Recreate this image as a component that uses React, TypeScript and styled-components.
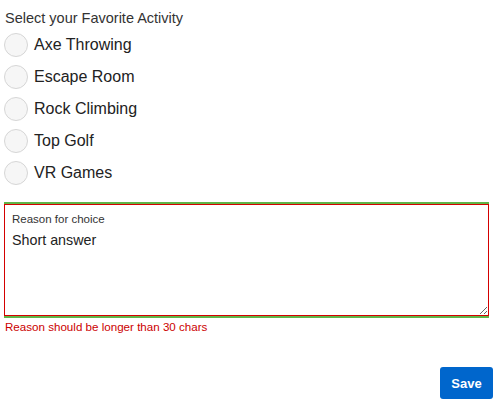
import { useState } from 'react';
import styled, { createGlobalStyle } from 'styled-components';

const GlobalStyle = createGlobalStyle`
  body {
    margin: 0;
    background: #fff;
    font-family: "Liberation Sans", Arial, sans-serif;
    color: #222;
  }
`;

const Page = styled.form`
  display: flex;
  flex-direction: column;
  padding: 8px 8px 12px 4px;
`;

const Title = styled.div`
  font-size: 14.5px;
  line-height: 20px;
  padding-left: 1px;
  color: #333;
`;

const Options = styled.div`
  display: flex;
  flex-direction: column;
  margin-top: 1px;
`;

const OptionRow = styled.label`
  display: flex;
  align-items: center;
  gap: 6px;
  height: 32px;
  font-size: 16px;
  color: #222;
  cursor: pointer;
`;

const RadioCircle = styled.span<{ $checked: boolean }>`
  box-sizing: border-box;
  width: 24px;
  height: 24px;
  border-radius: 50%;
  border: 1px solid #d6d6d6;
  background: ${( p ) => p.$checked ? '#0066cc' : '#f6f6f6'};
  flex: none;
`;

const HiddenInput = styled.input`
  display: none;
`;

const FieldFrame = styled.div`
  margin: 13px 4px 0 0;
  border-top: 2px solid #5fb548;
  border-bottom: 2px solid #5fb548;
`;

const FieldBox = styled.div`
  box-sizing: border-box;
  height: 112px;
  border: 1px solid #d40000;
  display: flex;
  flex-direction: column;
  padding: 7px 0 0 7px;
`;

const FieldLabel = styled.div`
  font-size: 11.5px;
  line-height: 14px;
  color: #333;
`;

const Answer = styled.textarea`
  flex: 1;
  border: none;
  outline: none;
  padding: 5px 0 0 0;
  margin: 0;
  font-family: "Liberation Sans", Arial, sans-serif;
  font-size: 14.3px;
  line-height: 18px;
  color: #222;
  resize: vertical;
  background: transparent;
`;

const ErrorText = styled.div`
  font-size: 11.6px;
  line-height: 14px;
  color: #cc0000;
  padding: 2px 0 0 1px;
`;

const Footer = styled.div`
  display: flex;
  justify-content: flex-end;
  margin-top: 33px;
`;

const SaveButton = styled.button`
  width: 53px;
  height: 32px;
  border: none;
  border-radius: 3px;
  background: #0066cc;
  color: #fff;
  font-family: "Liberation Sans", Arial, sans-serif;
  font-weight: bold;
  font-size: 13px;
  cursor: pointer;
`;

const activities = ['Axe Throwing', 'Escape Room', 'Rock Climbing', 'Top Golf', 'VR Games'];

export default function App () {

  const [choice, setChoice] = useState<string | null>(null);
  const [reason, setReason] = useState('Short answer');

  return <>
    <GlobalStyle />
    <Page onSubmit={( e ) => e.preventDefault()}>
      <Title>Select your Favorite Activity</Title>
      <Options>
        {activities.map( ( name ) => <OptionRow key={name}>
          <HiddenInput
            type="radio"
            name="activity"
            checked={choice === name}
            onChange={() => setChoice( name )} />
          <RadioCircle $checked={choice === name} />
          {name}
        </OptionRow> )}
      </Options>
      <FieldFrame>
        <FieldBox>
          <FieldLabel>Reason for choice</FieldLabel>
          <Answer value={reason} onChange={( e ) => setReason( e.target.value )} />
        </FieldBox>
      </FieldFrame>
      <ErrorText>Reason should be longer than 30 chars</ErrorText>
      <Footer>
        <SaveButton type="submit">Save</SaveButton>
      </Footer>
    </Page>
  </>;

}
